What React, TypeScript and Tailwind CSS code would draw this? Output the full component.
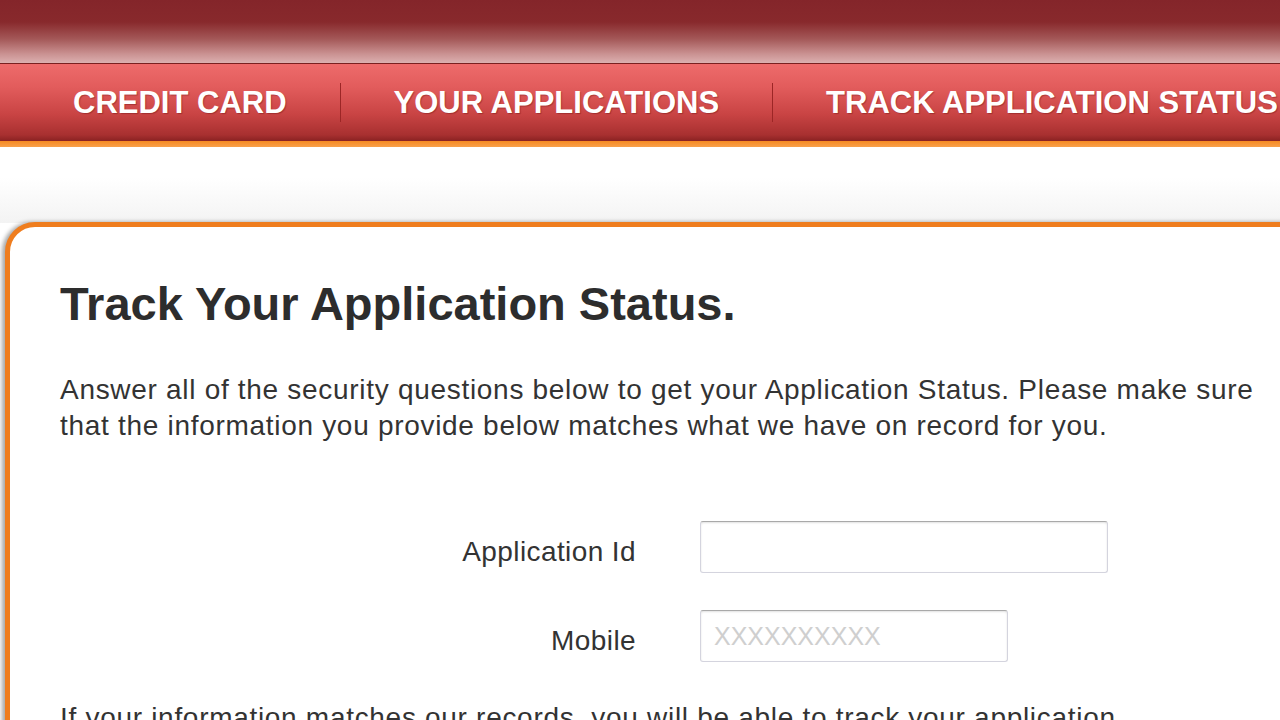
import React from 'react';

const navItems = ['CREDIT CARD', 'YOUR APPLICATIONS', 'TRACK APPLICATION STATUS'];

function NavBar() {
  return (
    <div className="h-[78px] bg-[linear-gradient(to_bottom,#ee6b6b_0%,#e25c5c_30%,#c94444_65%,#a83030_92%,#8a2222_100%)] flex items-center pl-[20px] border-t border-[#7a2020]">
      {navItems.map((item, index) => (
        <div key={item} className="flex items-center">
          {index > 0 && <span className="w-px h-[39px] bg-[#9c2626]" />}
          <span className="px-[53px] text-[31px] font-bold text-white leading-none whitespace-nowrap [text-shadow:1px_1px_1px_rgba(90,10,10,0.35)]">
            {item}
          </span>
        </div>
      ))}
    </div>
  );
}

function FormRow({ label, width, placeholder }: { label: string; width: string; placeholder?: string }) {
  return (
    <div className="flex items-start">
      <label className="w-[576px] text-right text-[28px] tracking-[0.4px] leading-[36px] text-[#333] mt-[13px]">{label}</label>
      <input
        className={`${width} ml-[64px] h-[52px] border border-[#d4d4de] border-t-[#a9a9a9] rounded-[3px] shadow-[inset_0_1px_2px_rgba(0,0,0,0.12)] px-[13px] text-[25px] text-[#333] placeholder:text-[#cfcfcf] outline-none`}
        placeholder={placeholder}
      />
    </div>
  );
}

export default function App() {
  return (
    <div className="w-[1280px] h-[720px] overflow-hidden bg-white font-['Liberation_Sans',Arial,sans-serif]">
      <div className="h-[63px] bg-[linear-gradient(to_bottom,#84252a_0%,#88292c_35%,#a45858_62%,#c99090_85%,#dcb0b0_100%)]" />
      <NavBar />
      <div className="h-[6px] bg-[linear-gradient(to_bottom,#f58a22,#f9a04a)]" />
      <div className="h-[76px] bg-[linear-gradient(to_bottom,#ffffff_0%,#ffffff_40%,#f3f3f3_100%)]" />
      <div className="w-[1400px] ml-[5px] -mt-[1px] border-[5px] border-[#ef7d1e] rounded-tl-[30px] bg-white shadow-[-3px_0_4px_rgba(0,0,0,0.35)] pl-[50px] pt-[54px] pb-[40px]">
        <h1 className="text-[47px] leading-[46px] font-bold text-[#2d2d2d]">Track Your Application Status.</h1>
        <p className="mt-[45px] w-[1205px] text-[28px] tracking-[0.7px] leading-[36px] text-[#333]">
          Answer all of the security questions below to get your Application Status. Please make sure that the information you provide below matches what we have on record for you.
        </p>
        <div className="mt-[77px] flex flex-col gap-[37px]">
          <FormRow label="Application Id" width="w-[408px]" />
          <FormRow label="Mobile" width="w-[308px]" placeholder="XXXXXXXXXX" />
        </div>
        <p className="mt-[38px] w-[1205px] text-[28px] tracking-[0.7px] leading-[36px] text-[#333]">
          If your information matches our records, you will be able to track your application immediately.
        </p>
      </div>
    </div>
  );
}
